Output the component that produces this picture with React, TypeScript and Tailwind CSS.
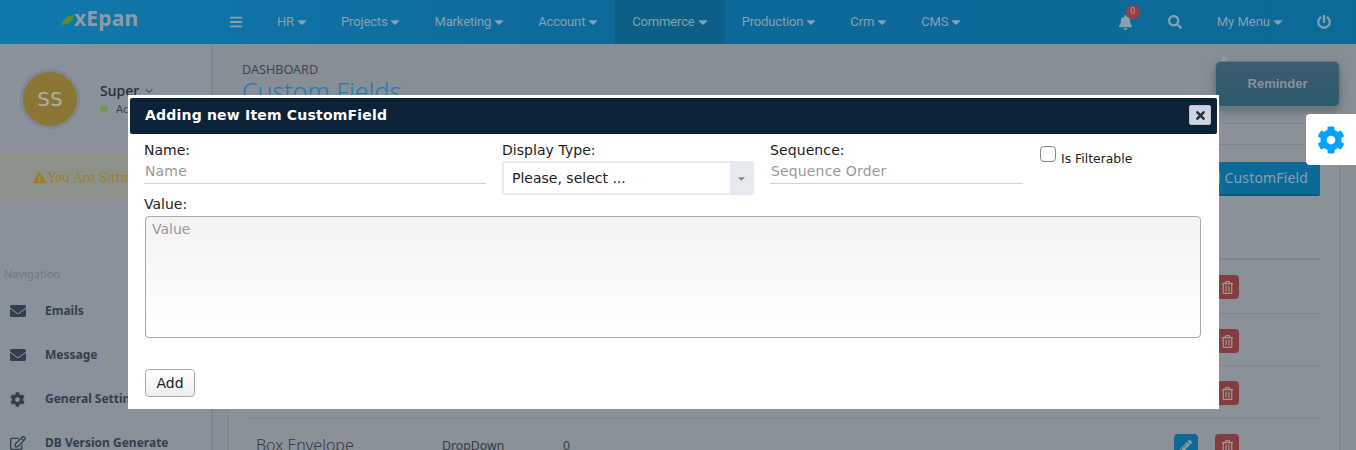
import React from 'react';
import { ChevronDown } from 'lucide-react';
import {
  FaBars,
  FaBell,
  FaCaretDown,
  FaCog,
  FaEnvelope,
  FaExclamationTriangle,
  FaPencilAlt,
  FaPowerOff,
  FaRegEdit,
  FaRegTrashAlt,
  FaSearch,
  FaTimes,
} from 'react-icons/fa';

const menus = ['HR', 'Projects', 'Marketing', 'Account', 'Commerce', 'Production', 'Crm', 'CMS'];

const navItems = [
  { label: 'Emails', icon: <FaEnvelope className="text-[16px]" /> },
  { label: 'Message', icon: <FaEnvelope className="text-[16px]" /> },
  { label: 'General Settings', icon: <FaCog className="text-[15px]" /> },
  { label: 'DB Version Generate', icon: <FaRegEdit className="text-[16px]" /> },
];

const rows = [
  { name: '', type: '', seq: '', height: 'h-[54px]' },
  { name: '', type: '', seq: '', height: 'h-[52px]' },
  { name: '', type: '', seq: '', height: 'h-[53px]' },
  { name: 'Box Envelope', type: 'DropDown', seq: '0', height: 'h-[53px]' },
];

const Header = () => (
  <header className="flex h-11 items-center bg-gradient-to-r from-[#1079ac] via-[#0c6898] to-[#0c6a98] text-[13px] text-[#87a0b2] font-['Roboto',sans-serif]">
    <div className="flex w-[229px] items-center pl-[61px] -mt-[7px]">
      <svg width="13" height="11" viewBox="0 0 13 11" className="mt-[4px]">
        <path d="M0 11 C1 5 5 1 13 0 C12 6 8 10 2 9.5 Z" fill="#5d8a2c" />
      </svg>
      <span className="text-[21px] leading-none font-bold tracking-[0.2px] font-['Noto_Sans',sans-serif] text-[#8e9ba6]">xEpan</span>
    </div>
    <FaBars className="text-[14px]" />
    <nav className="ml-[17px] flex h-full items-center tracking-[-0.15px]">
      {menus.map((menu) => (
        <div
          key={menu}
          className={`flex h-full items-center gap-[1px] pl-[17px] pr-[15px] ${menu === 'Commerce' ? 'bg-[#0c6085]' : ''}`}
        >
          {menu}
          <FaCaretDown className="text-[14px]" />
        </div>
      ))}
    </nav>
    <div className="ml-auto flex items-center pr-[25px]">
      <div className="relative">
        <FaBell className="text-[15px]" />
        <span className="absolute -top-[10px] left-[8px] flex h-[14px] w-[14px] items-center justify-center rounded-full bg-[#964045] text-[9px] text-[#a8a0a4]">
          0
        </span>
      </div>
      <FaSearch className="ml-[35px] text-[14px]" />
      <div className="ml-[35px] flex items-center gap-[1px]">
        My Menu
        <FaCaretDown className="text-[14px]" />
      </div>
      <FaPowerOff className="ml-[32px] text-[14px]" />
    </div>
  </header>
);

const Sidebar = () => (
  <aside className="flex h-[406px] w-[213px] shrink-0 flex-col overflow-hidden border-r-2 border-[#7c8590] bg-[#89919a] font-['Noto_Sans',sans-serif]">
    <div className="flex h-[110px] shrink-0 items-center pl-[20px]">
      <div className="flex h-[60px] w-[60px] items-center justify-center rounded-full border-[3px] border-[#7f8890] bg-[#8c7635] text-[20px] font-['DejaVu_Sans',sans-serif] text-[#aeb0ac]">
        SS
      </div>
      <div className="ml-[20px]">
        <div className="flex items-center gap-1 text-[14px] leading-[18px] font-medium text-[#232b36]">
          Super
          <ChevronDown size={12} />
        </div>
        <div className="mt-[2px] flex items-center gap-2 text-[11px] leading-[14px] text-[#3b444e]">
          <span className="h-2 w-2 rounded-full bg-[#6d9a4e]" />
          Active
        </div>
      </div>
    </div>
    <div className="flex h-[46px] shrink-0 items-center gap-[2px] bg-[#8c928a] pl-[33px] pt-[1px] text-[12px] font-['DejaVu_Serif',serif] text-[#a37a2c]">
      <FaExclamationTriangle className="text-[13px]" />
      <span className="whitespace-nowrap">You Are Sitting</span>
    </div>
    <div className="mt-[66px] shrink-0 pl-[4px] text-[11px] leading-[16px] text-[#6f7a84]">Navigation</div>
    <ul className="mt-[7px]">
      {navItems.map((item) => (
        <li key={item.label} className="flex h-[44px] items-center text-[12px] font-bold text-[#333f4d]">
          <span className="flex w-[45px] justify-start pl-[10px]">{item.icon}</span>
          {item.label}
        </li>
      ))}
    </ul>
  </aside>
);

const Content = () => (
  <main className="flex h-[406px] min-w-0 flex-1 flex-col bg-[#878e96] font-['Noto_Sans',sans-serif]">
    <div className="flex h-[79px] shrink-0 justify-between pl-[29px] pr-[16px]">
      <div className="pt-[19px]">
        <div className="text-[12.6px] leading-[14px] text-[#3f464e]">DASHBOARD</div>
        <h1 className="-mt-[2px] whitespace-nowrap text-[25px] leading-[32px] font-light text-[#1b7eb0]">Custom Fields</h1>
      </div>
      <div className="relative mt-[17px] flex h-[46px] w-[125px] items-center justify-center rounded-[6px] border border-[#6c7780] bg-gradient-to-b from-[#3a5c70] to-[#2c5a6c] text-[13px] font-bold font-['Liberation_Sans',sans-serif] text-[#8a9199] shadow-[0_4px_8px_rgba(60,70,80,0.5)]">
        Reminder
        <span className="absolute -top-[6px] left-[4px] h-0 w-0 border-x-[4px] border-b-[5px] border-x-transparent border-b-[#929aa1]" />
      </div>
    </div>
    <section className="ml-[15px] mr-[16px] flex flex-1 flex-col overflow-hidden border-x border-t border-[#7c8590] bg-[#8a9199] pl-[20px] pr-[19px]">
      <div className="-ml-[20px] -mr-[19px] h-[21px] shrink-0 border-b border-[#7c8590]" />
      <div className="flex h-[115px] shrink-0 items-start justify-end border-b-2 border-[#7c8590] pt-[17px]">
        <button className="h-[34px] rounded-[2px] border-b-2 border-[#0a5a80] bg-[#0c6a98] px-3 pb-[1px] text-[14px] tracking-[0.15px] text-[#86a1b3]">
          Add CustomField
        </button>
      </div>
      {rows.map((row, index) => (
        <div key={index} className={`flex shrink-0 items-start border-b border-[#7c8590] pl-[7px] ${row.height}`}>
          <span className="mt-[14px] w-[186px] text-[16px] leading-[24px] font-light text-[#333b43]">{row.name}</span>
          <span className="mt-[19px] w-[121px] text-[12.3px] leading-[16px] text-[#333b43]">{row.type}</span>
          <span className="mt-[19px] text-[12px] leading-[16px] text-[#333b43]">{row.seq}</span>
          <div className="ml-auto mt-[15px] mr-[81px] flex gap-[17px]">
            <span className="flex h-6 w-6 items-center justify-center rounded-[4px] bg-[#0c6a98] text-[12px] text-[#8d9aa4]">
              <FaPencilAlt />
            </span>
            <span className="flex h-6 w-6 items-center justify-center rounded-[4px] bg-[#843c3f] text-[13px] text-[#9c9a9c]">
              <FaRegTrashAlt />
            </span>
          </div>
        </div>
      ))}
    </section>
  </main>
);

const Modal = () => (
  <div className="absolute left-[128px] top-[95px] h-[314px] w-[1091px] bg-white px-[2px] pt-[3px] font-['DejaVu_Sans',sans-serif] text-[#222] shadow-[0_0_1px_#999]">
    <div className="flex h-[36px] items-center justify-between rounded-[2px] bg-[#0b2239] pb-[2px] pl-[15px] pr-[6px]">
      <span className="text-[14px] font-bold tracking-[0.2px] text-white">Adding new Item CustomField</span>
      <button className="flex h-5 w-[22px] items-center justify-center rounded-[2px] border border-[#b6bfcb] bg-[#cfd6e0] text-[13px] text-[#22303f]">
        <FaTimes />
      </button>
    </div>
    <div className="px-[14px]">
      <div className="flex items-start">
        <div className="mt-[6px] w-[342px]">
          <label className="block text-[14px] leading-[20px]">Name:</label>
          <div className="h-[24px] border-b border-[#d3d3d3] pl-[1px] text-[14px] leading-[23px] tracking-[0.15px] text-[#999]">Name</div>
        </div>
        <div className="ml-[16px] mt-[6px] w-[252px]">
          <label className="block text-[14px] leading-[20px] tracking-[0.05px]">Display Type:</label>
          <div className="mt-[1px] flex h-[34px] items-stretch overflow-hidden rounded-[3px] border-2 border-[#e6e9ed] text-[14px]">
            <span className="flex-1 pl-2 leading-[30px]">Please, select ...</span>
            <span className="flex w-[22px] items-center justify-center bg-[#e6e9ed] text-[11px] text-[#888]">
              <FaCaretDown />
            </span>
          </div>
        </div>
        <div className="ml-[16px] mt-[6px] w-[253px]">
          <label className="block text-[14px] leading-[20px] tracking-[0.1px]">Sequence:</label>
          <div className="h-[24px] border-b border-[#d3d3d3] pl-[1px] text-[14px] leading-[23px] tracking-[0.15px] text-[#999]">Sequence Order</div>
        </div>
        <div className="ml-[17px] mt-[12px] flex items-start">
          <span className="h-4 w-4 rounded-[4px] border border-[#888] bg-white" />
          <span className="ml-[5px] mt-[4px] text-[12.4px] leading-[18px]">Is Filterable</span>
        </div>
      </div>
      <label className="mt-[-1px] block text-[14px] leading-[20px]">Value:</label>
      <div className="ml-[1px] mt-[2px] h-[122px] w-[1056px] rounded-[4px] border border-[#aaa] bg-gradient-to-b from-[#f3f3f3] to-white px-[6px] py-[2px] text-[14px] leading-[20px] text-[#999]">
        Value
      </div>
      <button className="ml-[1px] mt-[31px] h-[28px] w-[50px] rounded-[4px] border border-[#aaa] bg-gradient-to-b from-white to-[#eee] text-[14px]">
        Add
      </button>
    </div>
  </div>
);

export default function App() {
  return (
    <div className="relative h-[450px] w-[1356px] overflow-hidden bg-[#878e96]">
      <Header />
      <div className="flex">
        <Sidebar />
        <Content />
      </div>
      <Modal />
      <div className="absolute right-0 top-[114px] flex h-[51px] w-[50px] items-center justify-center rounded-l-[4px] bg-white text-[28px] text-[#00a2ff]">
        <FaCog />
      </div>
    </div>
  );
}
